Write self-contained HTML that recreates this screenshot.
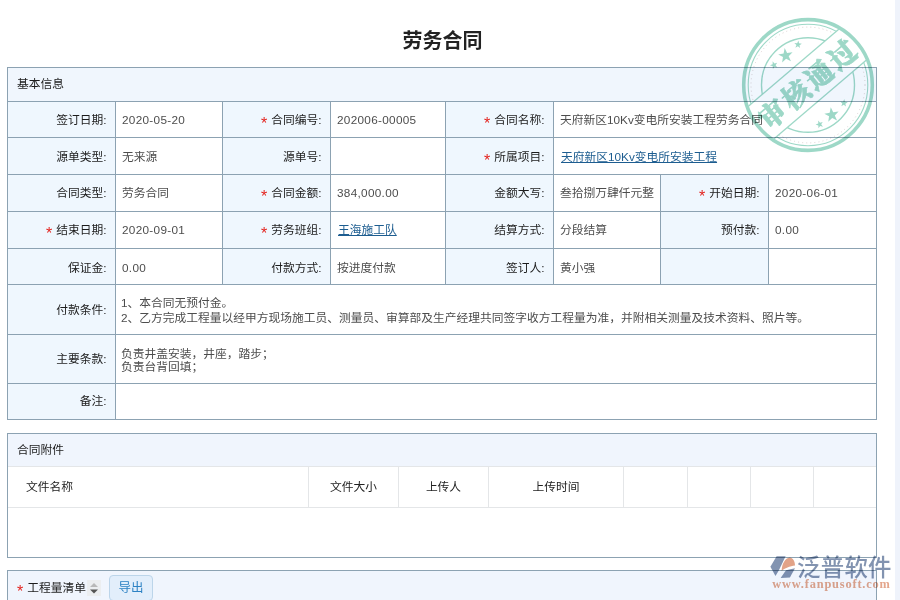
<!DOCTYPE html>
<html lang="zh-CN">
<head>
<meta charset="utf-8">
<title>劳务合同</title>
<style>
*{box-sizing:border-box;margin:0;padding:0}
html,body{width:900px;height:600px;overflow:hidden;background:#fff}
body{position:relative;font-family:"Liberation Sans","Noto Sans CJK SC",sans-serif;font-size:11.75px;color:#222}
.abs{position:absolute}
.strip{left:895px;top:0;width:5px;height:600px;background:#eff3fb}
.title{left:0;width:885px;top:26px;height:30px;line-height:30px;text-align:center;font-size:20px;font-weight:bold;color:#222}
.hl{position:absolute;height:1px;background:#8ca2b2}
.vl{position:absolute;width:1px;background:#8ca2b2}
.bg{position:absolute;background:#eff7fe}
.hd{position:absolute;background:#f0f6fd}
.lb{position:absolute;padding-right:1.5px;text-align:right;white-space:nowrap;color:#1c1c1c;height:16px;line-height:16px}
.lb i{font-style:normal;color:#e3241f;margin-right:4px;font-family:"Liberation Sans",sans-serif;font-size:16px;line-height:10px;position:relative;top:5px}
.v{position:absolute;white-space:nowrap;color:#4d4d4d;height:16px;line-height:16px}
.v a{color:#1d5d90;text-decoration:underline}
.n{letter-spacing:.3px}
.ml{position:absolute;white-space:nowrap;color:#4d4d4d;line-height:15.5px}
.gl{position:absolute;background:#e4e6e8}
.th{position:absolute;text-align:center;color:#222;height:16px;line-height:16px}
</style>
</head>
<body>
<div class="abs strip"></div>
<div class="abs title">劳务合同</div>

<!-- ===== panel 1 : 基本信息 ===== -->
<div class="hd" style="left:7px;top:67px;width:870px;height:34px"></div>
<!-- label backgrounds -->
<div class="bg" style="left:7px;top:101px;width:108px;height:318px"></div>
<div class="bg" style="left:222px;top:101px;width:108px;height:183px"></div>
<div class="bg" style="left:445px;top:101px;width:108px;height:183px"></div>
<div class="bg" style="left:660px;top:174px;width:108px;height:110px"></div>

<!-- horizontal lines -->
<div class="hl" style="left:7px;top:67px;width:870px"></div>
<div class="hl" style="left:7px;top:101px;width:870px"></div>
<div class="hl" style="left:7px;top:137px;width:870px"></div>
<div class="hl" style="left:7px;top:174px;width:870px"></div>
<div class="hl" style="left:7px;top:211px;width:870px"></div>
<div class="hl" style="left:7px;top:248px;width:870px"></div>
<div class="hl" style="left:7px;top:284px;width:870px"></div>
<div class="hl" style="left:7px;top:334px;width:870px"></div>
<div class="hl" style="left:7px;top:383px;width:870px"></div>
<div class="hl" style="left:7px;top:419px;width:870px"></div>
<!-- vertical lines -->
<div class="vl" style="left:7px;top:67px;height:353px"></div>
<div class="vl" style="left:876px;top:67px;height:353px"></div>
<div class="vl" style="left:115px;top:101px;height:318px"></div>
<div class="vl" style="left:222px;top:101px;height:183px"></div>
<div class="vl" style="left:330px;top:101px;height:183px"></div>
<div class="vl" style="left:445px;top:101px;height:183px"></div>
<div class="vl" style="left:553px;top:101px;height:183px"></div>
<div class="vl" style="left:660px;top:174px;height:110px"></div>
<div class="vl" style="left:768px;top:174px;height:110px"></div>

<div class="lb" style="left:17px;top:76px;text-align:left">基本信息</div>

<!-- row 1 -->
<div class="lb" style="left:8px;width:100px;top:112px">签订日期:</div>
<div class="v" style="left:122px;top:112px"><span class="n">2020-05-20</span></div>
<div class="lb" style="left:223px;width:100px;top:112px"><i>*</i>合同编号:</div>
<div class="v" style="left:337px;top:112px"><span class="n">202006-00005</span></div>
<div class="lb" style="left:446px;width:100px;top:112px"><i>*</i>合同名称:</div>
<div class="v" style="left:560px;top:112px">天府新区10Kv变电所安装工程劳务合同</div>
<!-- row 2 -->
<div class="lb" style="left:8px;width:100px;top:149px">源单类型:</div>
<div class="v" style="left:122px;top:149px">无来源</div>
<div class="lb" style="left:223px;width:100px;top:149px">源单号:</div>
<div class="lb" style="left:446px;width:100px;top:149px"><i>*</i>所属项目:</div>
<div class="v" style="left:561px;top:149px"><a>天府新区10Kv变电所安装工程</a></div>
<!-- row 3 -->
<div class="lb" style="left:8px;width:100px;top:185px">合同类型:</div>
<div class="v" style="left:122px;top:185px">劳务合同</div>
<div class="lb" style="left:223px;width:100px;top:185px"><i>*</i>合同金额:</div>
<div class="v" style="left:337px;top:185px"><span class="n">384,000.00</span></div>
<div class="lb" style="left:446px;width:100px;top:185px">金额大写:</div>
<div class="v" style="left:560px;top:185px">叁拾捌万肆仟元整</div>
<div class="lb" style="left:661px;width:100px;top:185px"><i>*</i>开始日期:</div>
<div class="v" style="left:775px;top:185px"><span class="n">2020-06-01</span></div>
<!-- row 4 -->
<div class="lb" style="left:8px;width:100px;top:222px"><i>*</i>结束日期:</div>
<div class="v" style="left:122px;top:222px"><span class="n">2020-09-01</span></div>
<div class="lb" style="left:223px;width:100px;top:222px"><i>*</i>劳务班组:</div>
<div class="v" style="left:338px;top:222px"><a>王海施工队</a></div>
<div class="lb" style="left:446px;width:100px;top:222px">结算方式:</div>
<div class="v" style="left:560px;top:222px">分段结算</div>
<div class="lb" style="left:661px;width:100px;top:222px">预付款:</div>
<div class="v" style="left:775px;top:222px"><span class="n">0.00</span></div>
<!-- row 5 -->
<div class="lb" style="left:8px;width:100px;top:259.5px">保证金:</div>
<div class="v" style="left:122px;top:259.5px"><span class="n">0.00</span></div>
<div class="lb" style="left:223px;width:100px;top:259.5px">付款方式:</div>
<div class="v" style="left:337px;top:259.5px">按进度付款</div>
<div class="lb" style="left:446px;width:100px;top:259.5px">签订人:</div>
<div class="v" style="left:560px;top:259.5px">黄小强</div>
<!-- row 6 -->
<div class="lb" style="left:8px;width:100px;top:302px">付款条件:</div>
<div class="v" style="left:121px;top:295px">1、本合同无预付金。</div>
<div class="v" style="left:121px;top:310px">2、乙方完成工程量以经甲方现场施工员、测量员、审算部及生产经理共同签字收方工程量为准，并附相关测量及技术资料、照片等。</div>
<!-- row 7 -->
<div class="lb" style="left:8px;width:100px;top:351px">主要条款:</div>
<div class="v" style="left:121px;top:346px">负责井盖安装，井座，踏步；</div>
<div class="v" style="left:121px;top:359px">负责台背回填；</div>
<!-- row 8 -->
<div class="lb" style="left:8px;width:100px;top:393px">备注:</div>

<!-- ===== panel 2 : 合同附件 ===== -->
<div class="hd" style="left:7px;top:433px;width:870px;height:33px;background:#f0f5fd"></div>
<div class="hl" style="left:7px;top:433px;width:870px"></div>
<div class="hl" style="left:7px;top:557px;width:870px"></div>
<div class="vl" style="left:7px;top:433px;height:125px"></div>
<div class="vl" style="left:876px;top:433px;height:125px"></div>
<div class="gl" style="left:8px;top:466px;width:868px;height:1px"></div>
<div class="gl" style="left:8px;top:507px;width:868px;height:1px"></div>
<div class="gl" style="left:308px;top:467px;width:1px;height:40px"></div>
<div class="gl" style="left:398px;top:467px;width:1px;height:40px"></div>
<div class="gl" style="left:488px;top:467px;width:1px;height:40px"></div>
<div class="gl" style="left:623px;top:467px;width:1px;height:40px"></div>
<div class="gl" style="left:687px;top:467px;width:1px;height:40px"></div>
<div class="gl" style="left:750px;top:467px;width:1px;height:40px"></div>
<div class="gl" style="left:813px;top:467px;width:1px;height:40px"></div>
<div class="lb" style="left:17px;top:442px;text-align:left">合同附件</div>
<div class="th" style="left:26px;top:479px;text-align:left">文件名称</div>
<div class="th" style="left:309px;width:89px;top:479px">文件大小</div>
<div class="th" style="left:399px;width:89px;top:479px">上传人</div>
<div class="th" style="left:489px;width:134px;top:479px">上传时间</div>

<!-- ===== panel 3 : 工程量清单 ===== -->
<div class="hd" style="left:7px;top:571px;width:870px;height:29px;background:#f0f5fd"></div>
<div class="hl" style="left:7px;top:570px;width:870px"></div>
<div class="vl" style="left:7px;top:570px;height:30px"></div>
<div class="vl" style="left:876px;top:570px;height:30px"></div>
<div class="lb" style="left:17px;top:580px;text-align:left"><i>*</i>工程量清单</div>
<svg class="abs" style="left:87px;top:580px" width="14" height="16" viewBox="0 0 14 16"><rect width="14" height="16" fill="#eceef0"/><path d="M3 7 L7 3 L11 7Z" fill="#b9b9b9"/><path d="M3 9.5 L7 13.5 L11 9.5Z" fill="#555"/></svg>
<div class="abs" style="left:109px;top:575px;width:44px;height:26px;border:1px solid #bcd5ea;border-radius:4px;background:#e2eefb;color:#2d82c4;text-align:center;line-height:24px;font-size:12.5px">导出</div>

<!-- ===== stamp ===== -->
<svg class="abs" style="left:738px;top:15.2px;opacity:.95;mix-blend-mode:multiply;transform:scaleY(1.016);transform-origin:70px 70px" width="140" height="140" viewBox="-70 -70 140 140">
<defs>
<clipPath id="noband"><path d="M-70 -70H70V70H-70Z M-100 -22.3H100V18.8H-100Z" clip-rule="evenodd" transform="rotate(-40)"/></clipPath>
<clipPath id="incirc"><circle r="63"/></clipPath>
</defs>
<circle r="64.3" fill="none" stroke="#98d6c4" stroke-width="3.6"/>
<g clip-path="url(#noband)" fill="none" stroke="#98d6c4">
<circle r="59.8" stroke-width="1.1"/>
<circle r="57" stroke-width="0.9" stroke-dasharray="0.9 3.2" stroke="#c9b9b9" opacity=".8"/>
<circle r="46.5" stroke-width="1.4"/>
</g>
<g clip-path="url(#incirc)"><g transform="rotate(-40)" stroke="#98d6c4" stroke-width="1.3">
<line x1="-70" x2="70" y1="-22.3" y2="-22.3"/><line x1="-70" x2="70" y1="18.8" y2="18.8"/>
</g></g>
<g fill="#98d6c4"><polygon points="-23.36,-36.33 -20.87,-31.48 -15.47,-32.13 -19.31,-28.27 -17.02,-23.33 -21.88,-25.79 -25.87,-22.09 -25.03,-27.47 -29.78,-30.12 -24.41,-30.99"/><polygon points="-9.65,-43.78 -8.95,-41.01 -6.10,-40.70 -8.53,-39.17 -7.94,-36.37 -10.14,-38.21 -12.62,-36.78 -11.56,-39.44 -13.68,-41.36 -10.82,-41.17"/><polygon points="-35.37,-23.26 -33.56,-21.04 -30.85,-21.96 -32.40,-19.56 -30.68,-17.26 -33.45,-18.00 -35.10,-15.65 -35.26,-18.51 -38.00,-19.36 -35.33,-20.39"/><polygon points="22.74,21.97 25.23,26.82 30.63,26.17 26.79,30.03 29.08,34.97 24.22,32.51 20.23,36.21 21.07,30.83 16.32,28.18 21.69,27.31"/><polygon points="10.23,35.04 12.04,37.26 14.75,36.34 13.20,38.74 14.92,41.04 12.15,40.30 10.50,42.65 10.34,39.79 7.60,38.94 10.27,37.91"/><polygon points="36.25,13.82 36.95,16.59 39.80,16.90 37.37,18.43 37.96,21.23 35.76,19.39 33.28,20.82 34.34,18.16 32.22,16.24 35.08,16.43"/></g>
<text transform="rotate(-40)" x="-45.6 -15.2 15.2 45.6" y="9.6" text-anchor="middle" font-family="'Noto Serif CJK SC','Noto Sans CJK SC',serif" font-weight="900" font-size="27.5" fill="#98d6c4" stroke="#98d6c4" stroke-width="0.7" stroke-linejoin="round">审核通过</text>
</svg>

<!-- ===== watermark logo ===== -->
<svg class="abs" style="left:768px;top:552px;mix-blend-mode:multiply" width="126" height="40" viewBox="0 0 126 40">
<path d="M2.4 14.7 L8.6 4.2 L17.6 4.2 L10.9 18.2 L7.5 24 Z" fill="#8394b1"/>
<path d="M13.6 18.9 C13.8 11.5 17.5 6.3 21.5 5.6 C25 5.6 27 9.5 27 13.6 C22 14 16.5 16.5 13.6 18.9Z" fill="#e2a388"/>
<path d="M18 18.2 L27 16.3 L21.9 25.6 L12.6 26Z" fill="#8394b1"/>
<text x="29" y="24.3" font-family="'Liberation Sans','Noto Sans CJK SC',sans-serif" font-size="23.4" font-weight="500" letter-spacing="0.3" fill="#8293b0">泛普软件</text>
<text x="4.2" y="35.6" font-family="'Liberation Serif',serif" font-weight="bold" font-size="12.4" letter-spacing="0.82" fill="#e4a68c">www.fanpusoft.com</text>
</svg>

</body>
</html>
